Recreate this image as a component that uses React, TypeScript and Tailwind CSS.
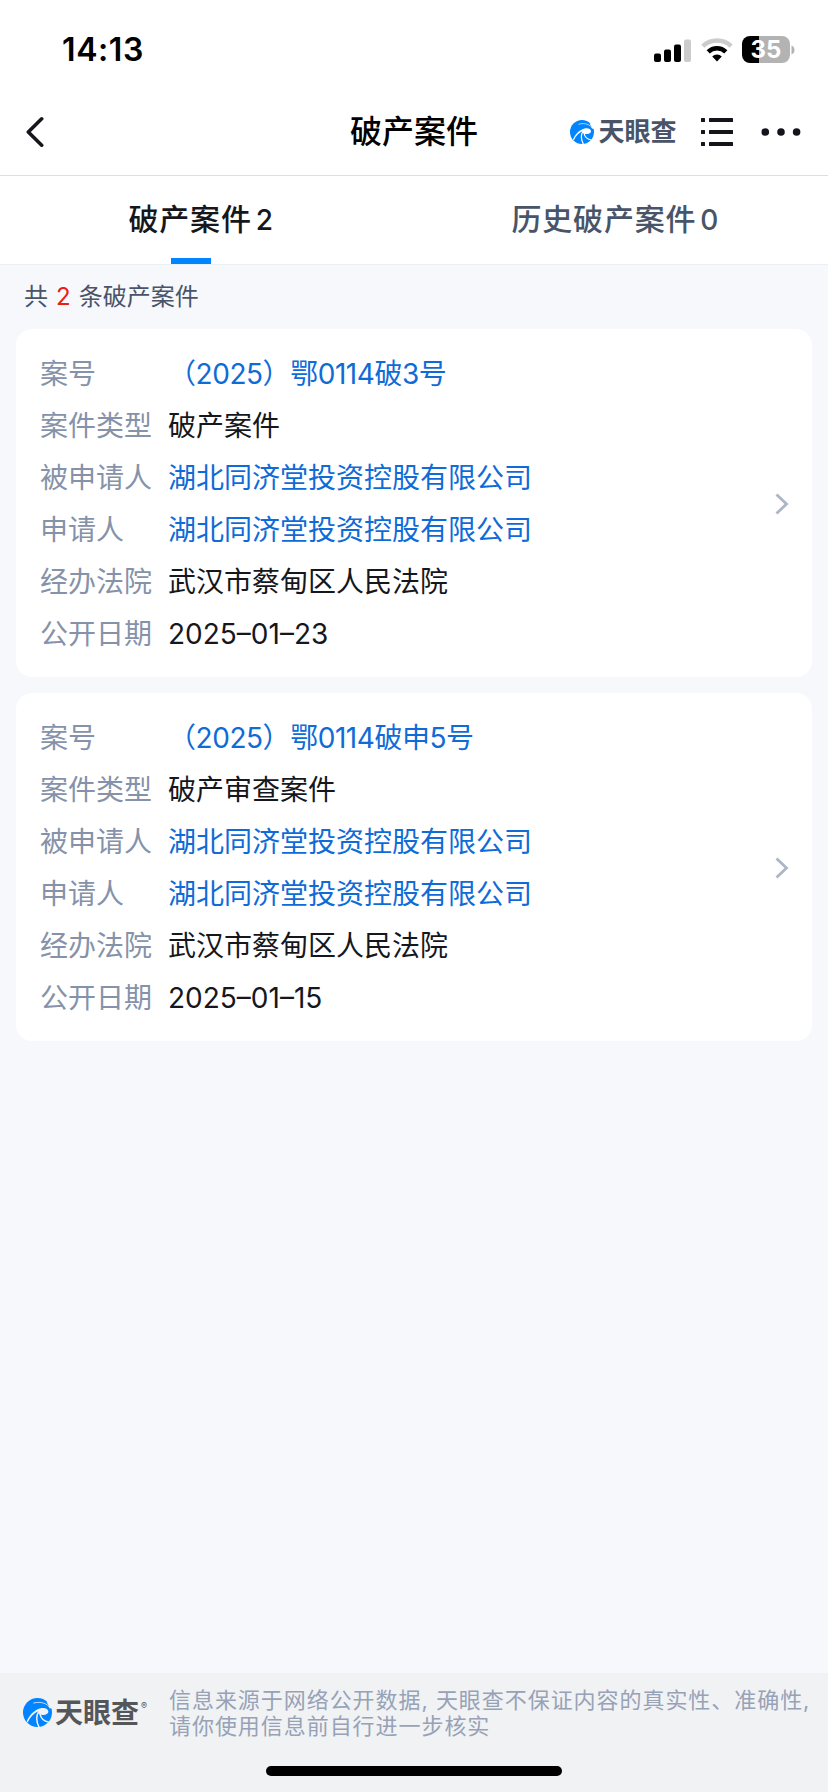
import React from "react";

type Row = { label: string; value: string; link?: boolean; caseNo?: boolean };

const CASES: Row[][] = [
  [
    { label: "案号", value: "（2025）鄂0114破3号", link: true, caseNo: true },
    { label: "案件类型", value: "破产案件" },
    { label: "被申请人", value: "湖北同济堂投资控股有限公司", link: true },
    { label: "申请人", value: "湖北同济堂投资控股有限公司", link: true },
    { label: "经办法院", value: "武汉市蔡甸区人民法院" },
    { label: "公开日期", value: "2025–01–23" },
  ],
  [
    { label: "案号", value: "（2025）鄂0114破申5号", link: true, caseNo: true },
    { label: "案件类型", value: "破产审查案件" },
    { label: "被申请人", value: "湖北同济堂投资控股有限公司", link: true },
    { label: "申请人", value: "湖北同济堂投资控股有限公司", link: true },
    { label: "经办法院", value: "武汉市蔡甸区人民法院" },
    { label: "公开日期", value: "2025–01–15" },
  ],
];

function SwirlMark({ className, gap }: { className: string; gap: string }) {
  return (
    <svg viewBox="0 0 48 48" className={className} fill="none">
      <circle cx="24" cy="24" r="24" fill="#0084ff" />
      <path d="M6 39C10 29 18 20 29 17C36 15 42 18 42 22.500C42 27 35 29.500 28 27.500C25.500 26 25 24 25.500 22C18 25 12 31 7.500 41Z" fill={gap} />
      <path d="M26 22C21.500 30 22 40 27 49" stroke={gap} strokeWidth="2.400" />
      <path d="M28 26C29.500 34 35 39 43 40" stroke={gap} strokeWidth="2.400" />
      <path d="M17 8.500C30 5 40 9 45 17" stroke={gap} strokeWidth="1.300" />
      <path d="M39 7L49 6V17L44 17C43 13 41 10 39 7Z" fill={gap} />
    </svg>
  );
}

function StatusBar() {
  return (
    <div className="flex h-22 items-start justify-between pl-[62px] pr-[33px]">
      <div className="pt-[30px] text-[32px] leading-10 font-semibold tracking-[0.6px] text-black">14:13</div>
      <div className="flex items-center pt-9">
        <svg viewBox="0 0 37 24" className="h-6 w-[37px]">
          <rect x="0" y="15.500" width="7" height="8.500" rx="2" />
          <rect x="10" y="11.500" width="7" height="12.500" rx="2" />
          <rect x="20" y="6.500" width="7" height="17.500" rx="2" />
          <rect x="30" y="1.500" width="7" height="22.500" rx="2" fill="#ccc" />
        </svg>
        <svg viewBox="0 0 32 24" className="ml-[10px] h-6 w-8" fill="none">
          <path d="M1.800 8.200A20.500 20.500 0 0 1 30.200 8.200" stroke="#ccc" strokeWidth="4.500" />
          <path d="M7.200 13.800A12.600 12.600 0 0 1 24.800 13.800" stroke="#000" strokeWidth="4.500" />
          <path d="M16 23.500L11.200 18.600A6.800 6.800 0 0 1 20.800 18.600Z" fill="#000" />
        </svg>
        <div className="ml-[9px] flex h-[27px] w-12 items-center justify-center rounded-lg bg-linear-to-r from-black from-[17px] to-[#b3b3b3] to-[17px] pt-px text-[24px] leading-none font-bold text-white">
          35
        </div>
        <svg viewBox="0 0 4 10" className="ml-px h-[10px] w-1">
          <path d="M0.500 0.500C4.500 2 4.500 8 0.500 9.500Z" fill="#b3b3b3" />
        </svg>
      </div>
    </div>
  );
}

function Header() {
  return (
    <div className="grid h-22 grid-cols-[1fr_auto_1fr] items-center border-b border-[#dedede]">
      <svg viewBox="0 0 18 32" className="ml-[26px] h-8 w-[18px]" fill="none" stroke="#15171c" strokeWidth="3.600" strokeLinecap="round" strokeLinejoin="round">
        <path d="M15.700 2.800L2.300 16L15.700 29.200" />
      </svg>
      <h1 className="text-[32px] leading-10 font-medium text-black">破产案件</h1>
      <div className="flex items-center justify-end pr-[27.500px]">
        <SwirlMark className="size-6" gap="#fff" />
        <span className="ml-1 text-[26px] leading-8 font-bold text-[#4a5468]">天眼查</span>
        <svg viewBox="0 0 32 28" className="ml-6 h-7 w-8" fill="#13151a">
          <rect x="0" y="0" width="4" height="4" rx=".5" />
          <rect x="8" y="0" width="24" height="4" rx=".5" />
          <rect x="0" y="12" width="4" height="4" rx=".5" />
          <rect x="8" y="12" width="24" height="4" rx=".5" />
          <rect x="0" y="24" width="4" height="4" rx=".5" />
          <rect x="8" y="24" width="24" height="4" rx=".5" />
        </svg>
        <svg viewBox="0 0 40 8" className="ml-7 h-2 w-10" fill="#13151a">
          <circle cx="4.300" cy="4" r="3.800" />
          <circle cx="20" cy="4" r="3.800" />
          <circle cx="35.600" cy="4" r="3.800" />
        </svg>
      </div>
    </div>
  );
}

function Tabs() {
  return (
    <div className="grid h-[89px] grid-cols-2 border-b border-[#e8eff5] text-[30px] font-medium">
      <div className="flex flex-col text-[#15171c]">
        <div className="flex h-[82px] items-center gap-1 pt-[5px] pl-[128.500px]">
          <span className="tracking-[0.8px]">破产案件</span>
          <span className="text-[28px]">2</span>
        </div>
        <div className="ml-[171px] h-1.5 w-10 bg-[#0084ff]" />
      </div>
      <div className="flex h-[82px] items-center gap-1 pt-[5px] pl-[97.500px] text-[#485468]">
        <span className="tracking-[0.8px]">历史破产案件</span>
        <span className="text-[28px]">0</span>
      </div>
    </div>
  );
}

function valueClass(row: Row) {
  if (row.caseNo) return "tracking-[-0.45px] text-[#0f6bd7]";
  return row.link ? "text-[#0f6bd7]" : "text-[#15171c]";
}

function CaseCard({ rows }: { rows: Row[] }) {
  return (
    <div className="flex h-[348px] items-center justify-between rounded-2xl bg-white pt-px pr-[23px] pl-6">
      <dl className="flex flex-col text-[28px] leading-[52px]">
        {rows.map((row) => (
          <div key={row.label} className="flex">
            <dt className="w-32 text-[#8592a9]">{row.label}</dt>
            <dd className={valueClass(row)}>{row.value}</dd>
          </div>
        ))}
      </dl>
      <svg viewBox="0 0 14 22" className="h-[22px] w-[14px]" fill="none" stroke="#adb6c6" strokeWidth="2.800">
        <path d="M1.500 1.500L11.500 11L1.500 20.500" />
      </svg>
    </div>
  );
}

export default function App() {
  return (
    <div className="flex h-[1792px] w-[828px] flex-col overflow-hidden bg-[#f6f8fc] font-[Inter,'Noto_Sans_CJK_SC',sans-serif]">
      <div className="bg-white">
        <StatusBar />
        <Header />
        <Tabs />
      </div>
      <main className="flex flex-1 flex-col px-4">
        <p className="flex h-16 items-center gap-2 pl-2 text-[24px] text-[#485468]">
          <span>共</span>
          <span className="text-[#e8200f]">2</span>
          <span>条破产案件</span>
        </p>
        <div className="flex flex-col gap-4">
          {CASES.map((rows, i) => (
            <CaseCard key={i} rows={rows} />
          ))}
        </div>
      </main>
      <footer className="flex h-[119px] flex-col items-center justify-between bg-[#f1f2f4] pt-[14px] pb-4">
        <div className="flex w-full items-center pl-[23px]">
          <SwirlMark className="mb-0.5 size-[29px]" gap="#f1f2f4" />
          <span className="ml-[3px] text-[28px] leading-8 font-bold text-[#555659]">天眼查</span>
          <span className="mb-4 ml-0.5 w-[8px] text-[9px] leading-none text-[#555659]">®</span>
          <p className="ml-5 text-[22px] leading-[26px] tracking-[0.95px] whitespace-nowrap text-[#97a2b7]">
            信息来源于网络公开数据, 天眼查不保证内容的真实性、准确性,
            <br />
            请你使用信息前自行进一步核实
          </p>
        </div>
        <div className="h-[10px] w-[296px] rounded-full bg-black" />
      </footer>
    </div>
  );
}
